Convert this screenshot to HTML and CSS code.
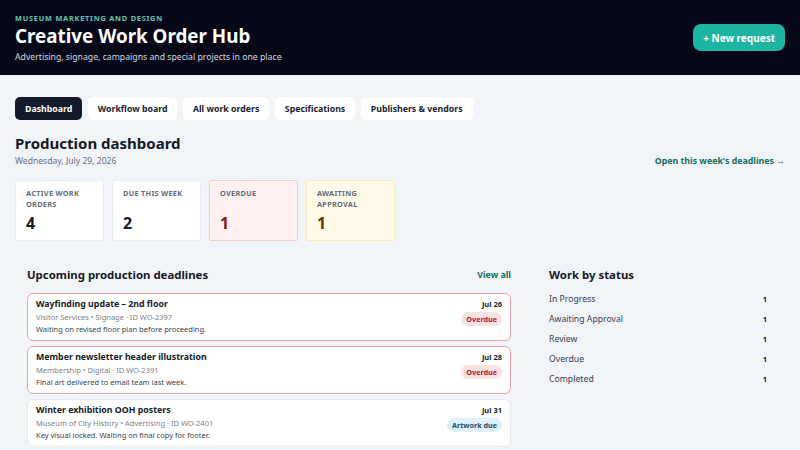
FILE: index.html
```html
<!DOCTYPE html>
<html lang="en">

<head>
    <meta charset="UTF-8">
    <meta name="viewport" content="width=device-width, initial-scale=1.0">
    <title>Creative Work Order Hub</title>
    <link rel="stylesheet" href="styles.css">
</head>

<body>
    <header class="top">
        <div class="brand">
            <p class="eyebrow">Museum marketing and design</p>
            <h1 class="title">Creative Work Order Hub</h1>
            <p class="subtitle">Advertising, signage, campaigns and special projects in one place</p>
        </div>
        <button class="new-btn">+ New request</button>
    </header>

    <main class="page">
        <nav class="tabs">
            <button class="tab active">Dashboard</button>
            <button class="tab">Workflow board</button>
            <button class="tab">All work orders</button>
            <button class="tab">Specifications</button>
            <button class="tab">Publishers &amp; vendors</button>
        </nav>

        <section class="head-row">
            <div>
                <h2 class="page-title">Production dashboard</h2>
                <p class="date">Wednesday, July 29, 2026</p>
            </div>
            <a class="link" href="#">Open this week's deadlines →</a>
        </section>

        <section class="stats">
            <div class="stat">
                <p class="stat-label">Active work orders</p>
                <p class="stat-value">4</p>
            </div>
            <div class="stat">
                <p class="stat-label">Due this week</p>
                <p class="stat-value">2</p>
            </div>
            <div class="stat danger">
                <p class="stat-label">Overdue</p>
                <p class="stat-value">1</p>
            </div>
            <div class="stat warn">
                <p class="stat-label">Awaiting approval</p>
                <p class="stat-value">1</p>
            </div>
        </section>

        <section class="columns">
            <div class="panel">
                <div class="panel-head">
                    <h3 class="panel-title">Upcoming production deadlines</h3>
                    <a class="link small" href="#">View all</a>
                </div>
                <div class="orders">
                    <div class="order late">
                        <div class="order-main">
                            <p class="order-title">Wayfinding update – 2nd floor</p>
                            <p class="order-meta">Visitor Services • Signage · ID WO-2397</p>
                            <p class="order-note">Waiting on revised floor plan before proceeding.</p>
                        </div>
                        <div class="order-side">
                            <span class="due">Jul 26</span>
                            <span class="badge red">Overdue</span>
                        </div>
                    </div>
                    <div class="order late">
                        <div class="order-main">
                            <p class="order-title">Member newsletter header illustration</p>
                            <p class="order-meta">Membership • Digital · ID WO-2391</p>
                            <p class="order-note">Final art delivered to email team last week.</p>
                        </div>
                        <div class="order-side">
                            <span class="due">Jul 28</span>
                            <span class="badge red">Overdue</span>
                        </div>
                    </div>
                    <div class="order">
                        <div class="order-main">
                            <p class="order-title">Winter exhibition OOH posters</p>
                            <p class="order-meta">Museum of City History • Advertising · ID WO-2401</p>
                            <p class="order-note">Key visual locked. Waiting on final copy for footer.</p>
                        </div>
                        <div class="order-side">
                            <span class="due">Jul 31</span>
                            <span class="badge blue">Artwork due</span>
                        </div>
                    </div>
                </div>
            </div>

            <div class="panel">
                <div class="panel-head">
                    <h3 class="panel-title">Work by status</h3>
                </div>
                <ul class="status-list">
                    <li><span>In Progress</span><b>1</b></li>
                    <li><span>Awaiting Approval</span><b>1</b></li>
                    <li><span>Review</span><b>1</b></li>
                    <li><span>Overdue</span><b>1</b></li>
                    <li><span>Completed</span><b>1</b></li>
                </ul>
            </div>
        </section>
    </main>
</body>

</html>
```

FILE: styles.css
```css
* {
    margin: 0;
    padding: 0;
    box-sizing: border-box;
}

body {
    background-color: #f1f4f9;
    font-family: 'Noto Sans', sans-serif;
    color: #141a26;
}

.top {
    background-color: #060818;
    height: 75px;
    padding: 0 15px;
    display: flex;
    justify-content: space-between;
    align-items: center;
}

.eyebrow {
    color: #5ec9b5;
    font-size: 7.3px;
    font-weight: bold;
    letter-spacing: 0.8px;
    text-transform: uppercase;
    line-height: 10px;
}

.title {
    color: #fff;
    font-size: 18.8px;
    line-height: 26px;
}

.subtitle {
    color: #d4d8e2;
    font-size: 8.7px;
    line-height: 12px;
    margin-top: 2px;
}

.new-btn {
    background-color: #1db5a1;
    color: #fff;
    border: none;
    border-radius: 8px;
    height: 27px;
    padding: 0 10px;
    font-family: 'Noto Sans', sans-serif;
    font-size: 10px;
    font-weight: bold;
    cursor: pointer;
}

.page {
    padding: 22px 15px 0;
}

.tabs {
    display: flex;
    gap: 5.5px;
}

.tab {
    background-color: #fff;
    border: none;
    border-radius: 5px;
    height: 23px;
    padding: 0 10px;
    font-family: 'Noto Sans', sans-serif;
    font-size: 8.75px;
    font-weight: bold;
    color: #1a2030;
    cursor: pointer;
}

.tab.active {
    background-color: #121a2c;
    color: #fff;
}

.head-row {
    display: flex;
    justify-content: space-between;
    align-items: flex-end;
    margin-top: 11px;
}

.page-title {
    font-size: 15px;
    line-height: 24px;
}

.date {
    font-size: 8.6px;
    color: #6b7280;
    line-height: 13px;
}

.link {
    color: #12705f;
    font-size: 8.8px;
    font-weight: bold;
    text-decoration: none;
    margin-bottom: 1px;
}

.link.small {
    margin-bottom: 0;
}

.stats {
    display: flex;
    gap: 8px;
    margin-top: 12px;
}

.stat {
    width: 89px;
    height: 61px;
    background-color: #fff;
    border: 1px solid #e8ebf0;
    border-radius: 2px;
    padding: 7px 10px;
}

.stat-label {
    font-size: 7.3px;
    font-weight: bold;
    color: #646b7a;
    text-transform: uppercase;
    letter-spacing: 0.3px;
    line-height: 10.5px;
    height: 21px;
}

.stat-value {
    font-size: 16px;
    font-weight: bold;
    line-height: 20px;
    margin-top: 4px;
}

.stat.danger {
    background-color: #fff0f1;
    border-color: #f4cdd1;
}

.stat.danger .stat-value {
    color: #7c1d1d;
}

.stat.warn {
    background-color: #fffbe8;
    border-color: #f7ecb5;
}

.stat.warn .stat-value {
    color: #6b3510;
}

.columns {
    display: grid;
    grid-template-columns: 508px 1fr;
    gap: 14px;
    margin-top: 13px;
}

.panel {
    padding: 12px;
}

.panel-head {
    display: flex;
    justify-content: space-between;
    align-items: center;
    height: 17px;
}

.panel-title {
    font-size: 11.4px;
    line-height: 17px;
}

.orders {
    display: flex;
    flex-direction: column;
    gap: 5px;
    margin-top: 10px;
}

.order {
    background-color: #fff;
    border: 1px solid #e6e9ef;
    border-radius: 6px;
    padding: 3px 8px 5px;
    display: flex;
    justify-content: space-between;
    height: 48px;
}

.order.late {
    border: 1.5px solid #e8a3aa;
}

.order-title {
    font-size: 8.8px;
    font-weight: bold;
    line-height: 14px;
}

.order-meta {
    font-size: 7.5px;
    color: #7a808c;
    line-height: 12px;
}

.order-note {
    font-size: 7.5px;
    color: #3d4350;
    line-height: 12px;
}

.order-side {
    display: flex;
    flex-direction: column;
    align-items: flex-end;
    gap: 3px;
    padding-top: 2px;
}

.due {
    font-size: 7.5px;
    font-weight: bold;
    line-height: 10px;
}

.badge {
    font-size: 7.2px;
    font-weight: bold;
    border-radius: 8px;
    padding: 2px 5px;
    line-height: 10px;
}

.badge.red {
    background-color: #fde1e3;
    color: #a4252f;
}

.badge.blue {
    background-color: #dff0fb;
    color: #1b4b72;
}

.status-list {
    list-style: none;
    margin-top: 6px;
    padding-right: 6px;
}

.status-list li {
    display: flex;
    justify-content: space-between;
    align-items: center;
    height: 20px;
    font-size: 8.7px;
    color: #3a4050;
}

.status-list b {
    font-size: 7.5px;
    color: #141a26;
}
```
